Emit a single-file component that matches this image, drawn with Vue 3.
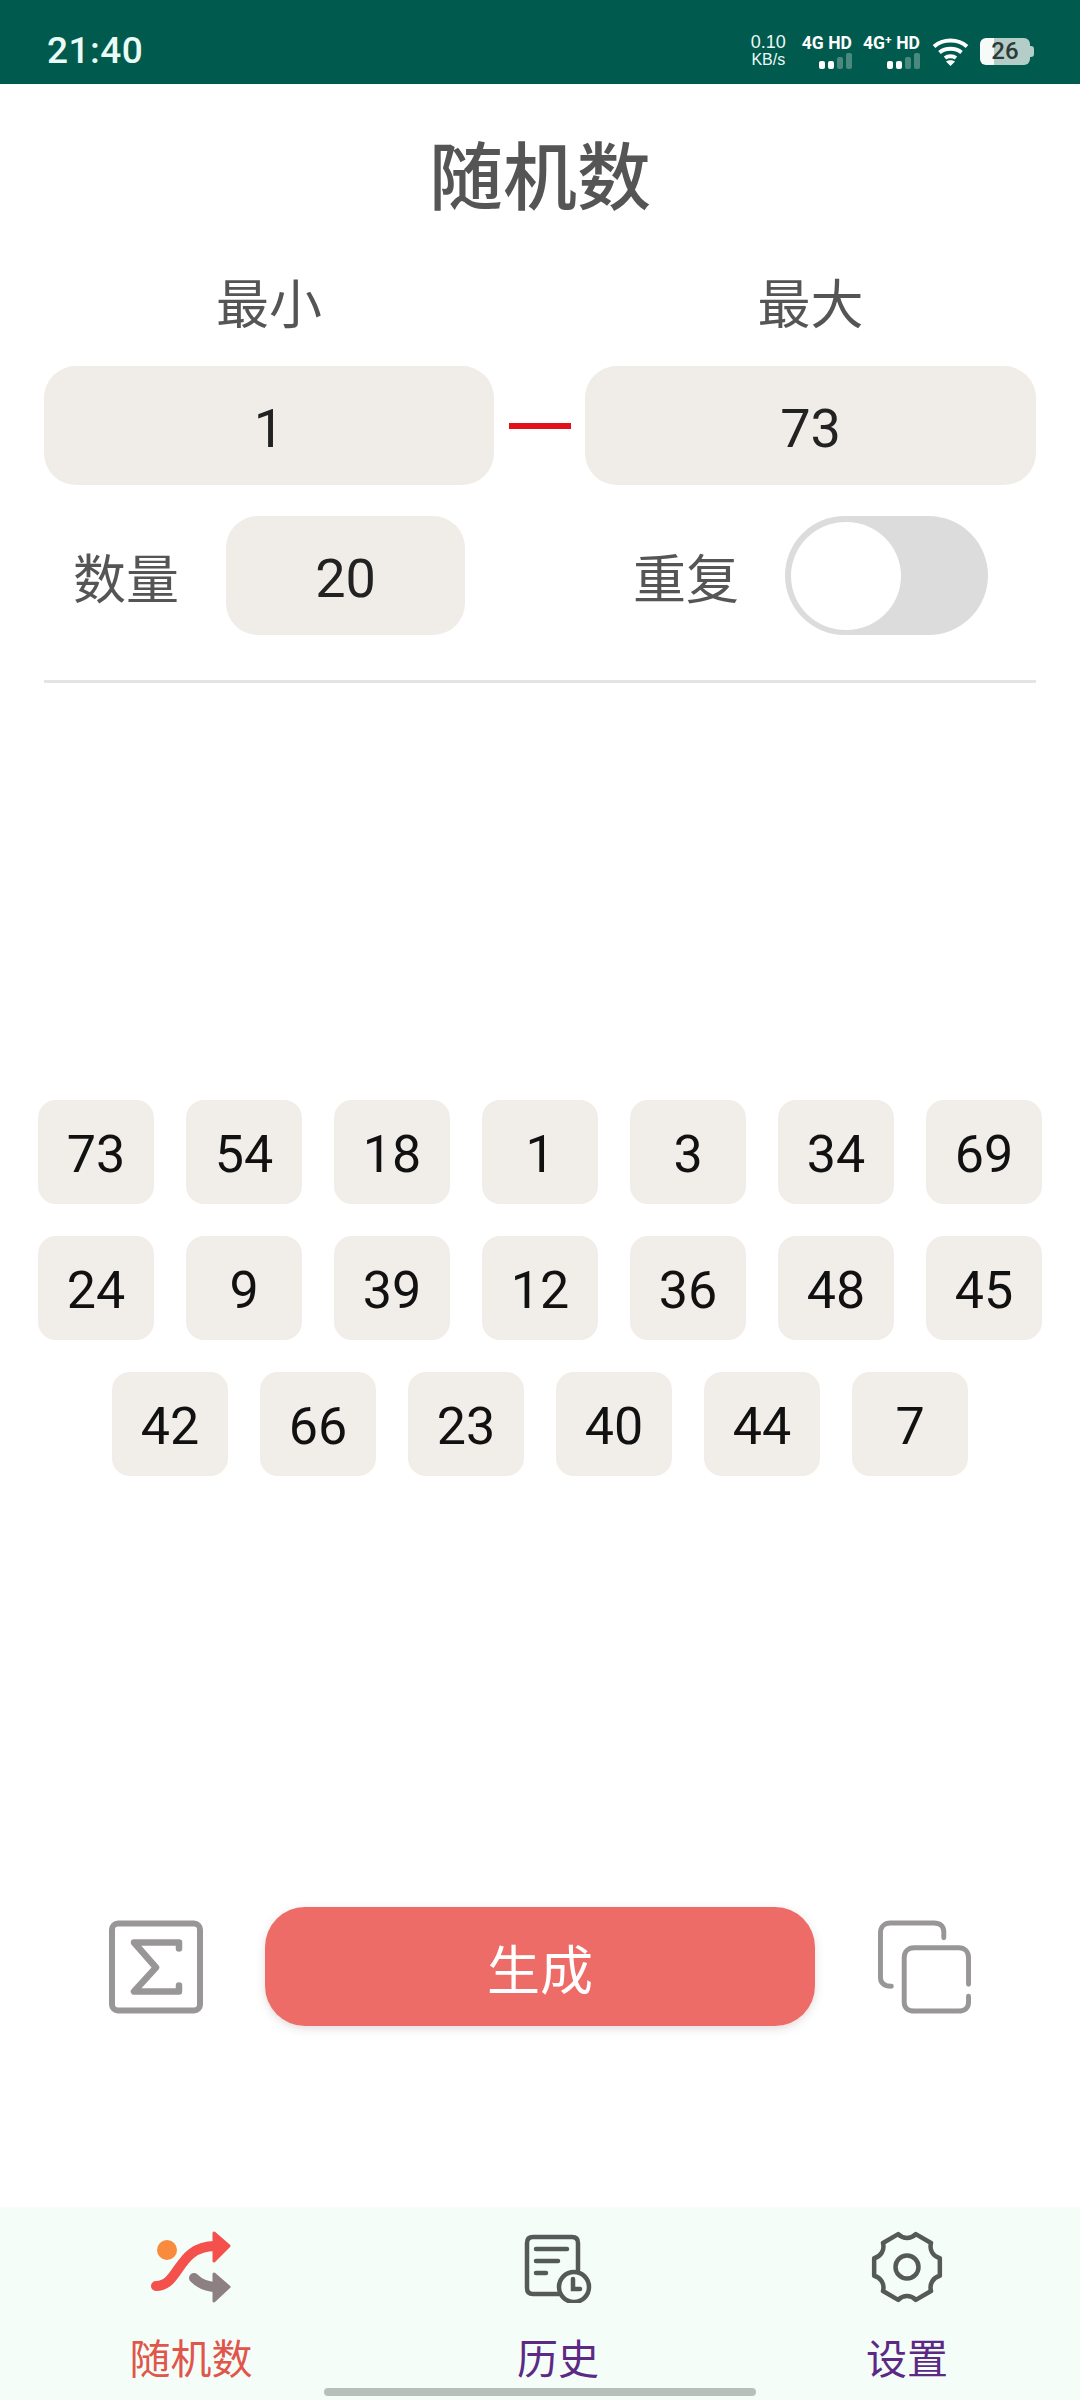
<template>
  <div class="screen">
    <header class="status-bar">
      <span class="clock">21:40</span>
      <div class="status-right">
        <div class="speed"><span>0.10</span><span>KB/s</span></div>
        <div v-for="net in networks" :key="net" class="net">
          <span class="net-label">{{ net }}</span>
          <span class="net-bars">
            <i class="on b1"></i><i class="on b2"></i><i class="b3"></i><i class="b4"></i>
          </span>
        </div>
        <svg class="wifi" viewBox="0 0 37 29" fill="none" stroke="#fff" stroke-width="4">
          <path d="M2 9.500C11 1.500 26 1.500 35 9.500" />
          <path d="M7.500 15.500C13.500 10.500 23.500 10.500 29.500 15.500" />
          <path d="M13 21C16 18.700 21 18.700 24 21" />
          <path d="M18.500 29l-4.500-4.500c2.500-1.600 6.500-1.600 9 0z" fill="#fff" stroke="none" />
        </svg>
        <div class="battery"><span>26</span></div>
      </div>
    </header>

    <main class="content">
      <h1 class="title">随机数</h1>

      <div class="range-grid labels">
        <span>最小</span>
        <span></span>
        <span>最大</span>
      </div>
      <div class="range-grid inputs">
        <div class="field">1</div>
        <div class="dash"></div>
        <div class="field">73</div>
      </div>

      <div class="options">
        <div class="option count">
          <span class="option-label">数量</span>
          <div class="field count-field">20</div>
        </div>
        <div class="option repeat">
          <span class="option-label">重复</span>
          <div class="toggle"><div class="knob"></div></div>
        </div>
      </div>

      <div class="divider"></div>

      <section class="results">
        <div v-for="n in numbers" :key="n" class="chip">{{ n }}</div>
      </section>

      <div class="actions">
        <svg class="icon-sum" viewBox="0 0 94 93" fill="none" stroke="#999697">
          <rect x="3" y="3" width="88" height="87" rx="6" stroke-width="6" />
          <path d="M70 28V22H25L47 47L25 71H70V65" stroke-width="6.500" stroke-linejoin="round" stroke-linecap="round" />
        </svg>
        <button class="generate">生成</button>
        <svg class="icon-copy" viewBox="0 0 94 95" fill="none" stroke="#999697" stroke-width="5" stroke-linecap="round">
          <path d="M67 18V12C67 6 63 3 57 3H13C7 3 3 7 3 13V58C3 63 6 67 14 67" />
          <path d="M92 65V38C92 32 88 28 82 28H37C31 28 27 32 27 38V83C27 89 31 92 37 92H82C88 92 92 89 92 83V77" />
        </svg>
      </div>
    </main>

    <nav class="tabbar">
      <div class="tab active">
        <svg class="tab-icon" viewBox="0 0 84 72">
          <circle cx="18" cy="19" r="10" fill="#f98b3f" />
          <path d="M7 55C31 55 28 15 66 15" fill="none" stroke="#f4504c" stroke-width="10" stroke-linecap="round" />
          <path d="M65 2L80 15L65 30z" fill="#f4504c" stroke="#f4504c" stroke-width="3" stroke-linejoin="round" />
          <path d="M45 47C50 52 58 56 68 56" fill="none" stroke="#8c8082" stroke-width="10" stroke-linecap="round" />
          <path d="M65 43L80 56L65 70z" fill="#8c8082" stroke="#8c8082" stroke-width="3" stroke-linejoin="round" />
        </svg>
        <span>随机数</span>
      </div>
      <div class="tab">
        <svg class="tab-icon history" viewBox="0 0 72 72" fill="none" stroke="#555a58" stroke-width="4.500" stroke-linecap="round">
          <path d="M54 39V12C54 8 52 6 48 6H9C5 6 3 8 3 12V57C3 61 5 63 9 63H35" />
          <path d="M12 18H43M12 30H34M12 42H22" />
          <circle cx="50" cy="56" r="15" />
          <path d="M49 48V58H56" />
        </svg>
        <span>历史</span>
      </div>
      <div class="tab">
        <svg class="tab-icon" viewBox="-36 -36 72 72" fill="none" stroke="#555a58" stroke-width="4.500" stroke-linejoin="round">
          <path :d="gearPath" />
          <circle r="11.500" />
        </svg>
        <span>设置</span>
      </div>
      <div class="home-bar"></div>
    </nav>
  </div>
</template>

<script setup>
const networks = ['4G HD', '4G⁺ HD']
const numbers = [73, 54, 18, 1, 3, 34, 69, 24, 9, 39, 12, 36, 48, 45, 42, 66, 23, 40, 44, 7]

const polar = (deg, r) => {
  const a = ((deg - 90) * Math.PI) / 180
  return `${(r * Math.cos(a)).toFixed(2)} ${(r * Math.sin(a)).toFixed(2)}`
}

// six flat-topped teeth, notch straight up at 0 degrees
const buildGear = () => {
  let d = `M${polar(0, 29)}`
  for (let i = 0; i < 6; i++) {
    const a = 30 + i * 60
    d += `Q${polar(a - 20, 29.5)} ${polar(a - 15, 34)}`
    d += `L${polar(a + 15, 34)}`
    d += `Q${polar(a + 20, 29.5)} ${polar(a + 30, 29)}`
  }
  return d + 'Z'
}

const gearPath = buildGear()
</script>

<style>
html,
body {
  margin: 0;
  background: #fff;
}
</style>

<style scoped>
.screen {
  width: 1080px;
  height: 2400px;
  display: flex;
  flex-direction: column;
  overflow: hidden;
  background: #fff;
  font-family: Roboto, "Noto Sans CJK SC", sans-serif;
}

.status-bar {
  height: 84px;
  flex: none;
  box-sizing: border-box;
  background: #005a4e;
  color: #eafaf5;
  display: flex;
  align-items: center;
  justify-content: space-between;
  padding: 18px 50px 0 47px;
}

.clock {
  font-size: 37px;
  font-weight: 500;
  letter-spacing: 0.5px;
  line-height: 1;
  margin-top: -2px;
}

.status-right {
  display: flex;
  align-items: center;
}

.speed {
  width: 37px;
  display: flex;
  flex-direction: column;
  align-items: center;
  font-family: "Liberation Sans", sans-serif;
  font-size: 16px;
  line-height: 17px;
  margin-right: 15px;
}

.speed span:first-child {
  font-size: 18px;
}

.net {
  display: flex;
  flex-direction: column;
  align-items: flex-end;
  margin-right: 11px;
}

.net-label {
  font-size: 17.5px;
  font-weight: 700;
  line-height: 18px;
  white-space: nowrap;
  color: #fff;
}

.net-bars {
  display: flex;
  align-items: flex-end;
  gap: 3px;
  height: 16px;
  margin-top: 1px;
}

.net-bars i {
  width: 6px;
  border-radius: 2px;
  background: #4a8a7e;
}

.net-bars i.on {
  background: #fff;
}

.b1,
.b2 {
  height: 8px;
}

.b3 {
  height: 12px;
}

.b4 {
  height: 16px;
}

.wifi {
  width: 37px;
  height: 29px;
  margin: 0 11px 0 1px;
}

.battery {
  position: relative;
  width: 50px;
  height: 27px;
  border-radius: 6px;
  background: linear-gradient(90deg, #f6fbfa 28%, #b4cdc7 28%);
  color: #2f3a38;
  font-size: 24px;
  font-weight: 500;
  text-align: center;
  line-height: 27px;
}

.battery::after {
  content: "";
  position: absolute;
  right: -4px;
  top: 8px;
  width: 4px;
  height: 11px;
  border-radius: 0 3px 3px 0;
  background: #b4cdc7;
}

.content {
  flex: 1;
  min-height: 0;
  display: flex;
  flex-direction: column;
  padding: 0 44px 181px;
}

.title {
  margin: 45px 0 0;
  font-size: 74px;
  font-weight: 500;
  line-height: 100px;
  text-align: center;
  color: #555;
}

.range-grid {
  display: grid;
  grid-template-columns: 450px 91px 451px;
  align-items: center;
}

.labels {
  margin-top: 34px;
  height: 70px;
  text-align: center;
  font-size: 53px;
  color: #555;
}

.inputs {
  margin-top: 33px;
}

.field {
  height: 119px;
  box-sizing: border-box;
  padding-top: 6px;
  border-radius: 32px;
  background: #f0ece7;
  color: #222;
  font-size: 54px;
  display: flex;
  align-items: center;
  justify-content: center;
}

.dash {
  height: 6px;
  width: 62px;
  margin-left: 15px;
  background: #e3101c;
}

.options {
  margin-top: 31px;
  display: flex;
  justify-content: space-between;
}

.option {
  display: flex;
  align-items: center;
}

.count {
  margin-left: 29px;
  gap: 45px;
}

.repeat {
  margin-right: 48px;
  gap: 44px;
}

.option-label {
  font-size: 53px;
  color: #555;
  width: 108px;
  white-space: nowrap;
}

.count-field {
  width: 239px;
}

.toggle {
  width: 203px;
  height: 119px;
  border-radius: 60px;
  background: #dcdcdc;
  display: flex;
  align-items: center;
  padding-left: 6px;
  box-sizing: border-box;
}

.knob {
  width: 110px;
  height: 108px;
  border-radius: 50%;
  background: #fff;
}

.divider {
  margin-top: 45px;
  height: 3px;
  background: #e4e4e4;
}

.results {
  flex: 1;
  width: 1004px;
  margin-left: -6px;
  padding-bottom: 15px;
  display: flex;
  flex-wrap: wrap;
  justify-content: center;
  align-content: center;
  gap: 32px;
}

.chip {
  width: 116px;
  height: 104px;
  box-sizing: border-box;
  padding-top: 6px;
  border-radius: 18px;
  background: #f1ede9;
  color: #111;
  font-size: 52px;
  display: flex;
  align-items: center;
  justify-content: center;
}

.actions {
  height: 119px;
  margin: 0 -44px;
  display: flex;
  align-items: center;
  justify-content: center;
  gap: 62px;
}

.icon-sum,
.icon-copy {
  width: 94px;
  height: 94px;
  flex: none;
}

.generate {
  width: 550px;
  height: 119px;
  border: 0;
  padding: 0;
  border-radius: 40px;
  background: #ee6c68;
  color: #fff;
  font-family: inherit;
  font-size: 53px;
  box-shadow: 0 3px 8px rgba(150, 120, 120, 0.25);
}

.tabbar {
  position: relative;
  height: 193px;
  flex: none;
  background: #f5fdf9;
  display: grid;
  grid-template-columns: 382px 352px 346px;
}

.tab {
  display: flex;
  flex-direction: column;
  align-items: center;
  padding-top: 24px;
  color: #5c2a86;
  font-size: 41px;
  line-height: 56px;
}

.tab span {
  margin-top: 29px;
}

.tab.active {
  color: #e0564a;
}

.tab-icon {
  width: 72px;
  height: 72px;
}

.tab-icon.history {
  margin-left: 3px;
}

.tab.active .tab-icon {
  width: 84px;
}

.home-bar {
  position: absolute;
  left: 324px;
  bottom: 4px;
  width: 432px;
  height: 8px;
  border-radius: 4px;
  background: #b5bfbb;
}
</style>
